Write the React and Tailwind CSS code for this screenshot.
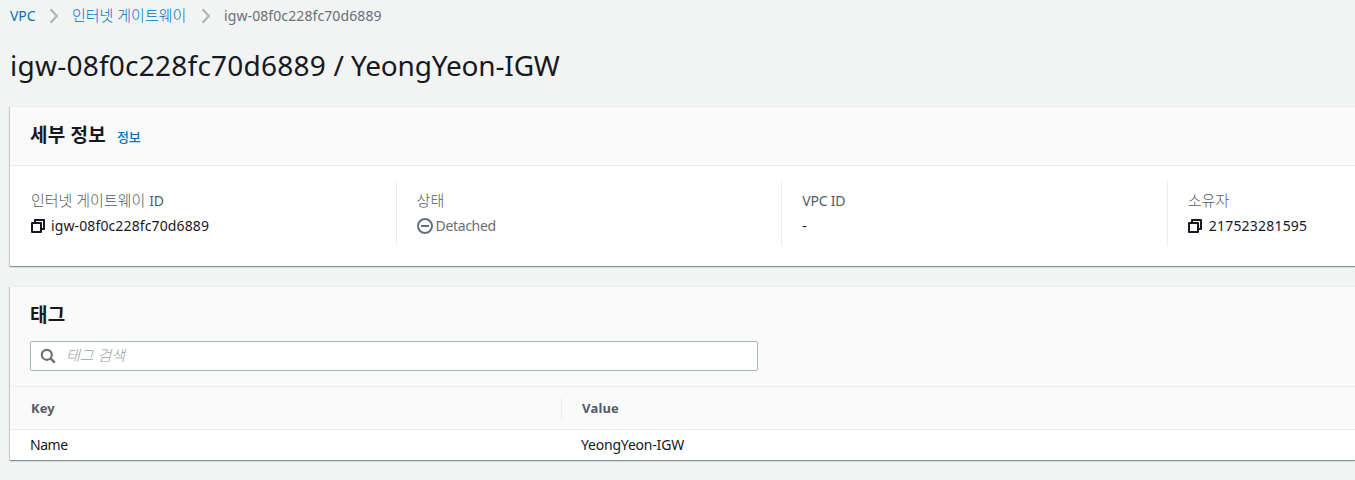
import React from "react";

const Chevron = () => (
  <svg className="shrink-0" width="10" height="16" viewBox="0 0 10 16" fill="none" stroke="#aab7b8" strokeWidth="2">
    <path d="M1.5 1.2 L8 8 L1.5 14.8" />
  </svg>
);

const CopyIcon = () => (
  <svg className="shrink-0" width="14" height="14" viewBox="0 0 14 14" fill="none" stroke="#16191f" strokeWidth="2" strokeLinejoin="round">
    <path d="M1 4h9v9H1z" />
    <path d="M4 4V1h9v9h-3" />
  </svg>
);

const DetachedIcon = () => (
  <svg className="shrink-0" width="16" height="16" viewBox="0 0 16 16" fill="none" stroke="#687078" strokeWidth="2">
    <circle cx="8" cy="8" r="7" />
    <path d="M4 8h8" />
  </svg>
);

const SearchIcon = () => (
  <svg className="shrink-0" width="16" height="16" viewBox="0 0 16 16" fill="none" stroke="#687078" strokeWidth="2.2">
    <circle cx="6.8" cy="6.8" r="5" />
    <path d="M10.4 10.4 L14.8 14.6" strokeWidth="2.4" />
  </svg>
);

const panel = "ml-[10px] bg-white shadow-[0_1px_1px_0_rgba(0,28,36,0.25),1px_1px_1px_0_rgba(0,28,36,0.15),-1px_1px_1px_0_rgba(0,28,36,0.15)] border-t border-[#eaeded]";

function Field({ label, divider, children }) {
  return (
    <div className={"h-[65px] w-[385.6px] shrink-0 " + (divider ? "border-l border-[#eaeded] pl-5" : "pl-[21px]")}>
      <div className="mt-[9px] flex h-[22px] items-baseline whitespace-nowrap text-[14px] leading-[22px] text-[#545b64]">{label}</div>
      <div className="mt-[3px] flex h-[22px] items-center whitespace-nowrap text-[14px] leading-[22px]">{children}</div>
    </div>
  );
}

export default function App() {
  return (
    <div className="h-[480px] w-full overflow-hidden bg-[#f2f3f3] font-['Noto_Sans','Noto_Sans_CJK_KR',sans-serif] text-[14px] text-[#16191f]">
      <nav className="flex h-8 items-center whitespace-nowrap pl-[10px] leading-[22px]">
        <a className="w-[39px] text-[14px] tracking-[-0.1px] text-[#0073bb]">VPC</a>
        <Chevron />
        <a className="ml-[13px] w-[129px] pb-[2px] text-[15px] font-light text-[#0073bb]">인터넷 게이트웨이</a>
        <Chevron />
        <span className="ml-[13px] tracking-[0.1px] text-[#687078]">igw-08f0c228fc70d6889</span>
      </nav>
      <h1 className="ml-[10px] mt-[15px] h-9 whitespace-nowrap text-[28px] leading-9">
        <span className="tracking-[0.24px]">igw-08f0c228fc70d6889 </span>
        <span className="tracking-[-0.18px]">/ YeongYeon-IGW</span>
      </h1>

      <section className={panel + " mt-[23px] h-[160px]"}>
        <header className="flex h-[59px] items-baseline border-b border-[#eaeded] bg-[#fafafa] pl-5 pt-[14px]">
          <h2 className="text-[19px] font-bold leading-[28px] tracking-[0.2px]">세부 정보</h2>
          <a className="ml-[11px] text-[13px] font-medium text-[#0073bb]">정보</a>
        </header>
        <div className="flex pt-[15px]">
          <Field label={<><span className="text-[15px] font-light leading-5">인터넷 게이트웨이</span><span className="ml-1 leading-5 tracking-[-0.3px]">ID</span></>}>
            <CopyIcon />
            <span className="ml-[6px] tracking-[0.12px]">igw-08f0c228fc70d6889</span>
          </Field>
          <Field label={<span className="text-[15px] font-light leading-5">상태</span>} divider>
            <DetachedIcon />
            <span className="ml-[3px] tracking-[-0.35px] text-[#687078]">Detached</span>
          </Field>
          <Field label={<span className="tracking-[-0.2px]">VPC ID</span>} divider>-</Field>
          <Field label={<span className="text-[15px] font-light leading-5">소유자</span>} divider>
            <CopyIcon />
            <span className="ml-[7px] tracking-[0.2px]">217523281595</span>
          </Field>
        </div>
      </section>

      <section className={panel + " mt-5 h-[174px]"}>
        <header className="h-[100px] border-b border-[#eaeded] bg-[#fafafa] pt-[14px]">
          <h2 className="h-7 pl-5 text-[19px] font-bold leading-[28px] tracking-[0.2px]">태그</h2>
          <div className="ml-5 mt-3 flex h-[30px] w-[728px] items-center rounded-[2px] border border-[#aab7b8] bg-white pl-[9px]">
            <SearchIcon />
            <span className="ml-[10px] pb-[2px] text-[15px] font-light italic leading-[22px] text-[#95a5a6]">태그 검색</span>
          </div>
        </header>
        <div className="flex h-[43px] items-center border-b border-[#eaeded] bg-[#fafafa] text-[13px] font-bold text-[#545b64]">
          <div className="w-[551px] pl-[21px] pt-[2px] tracking-[0.1px]">Key</div>
          <div className="flex h-[21px] items-center border-l border-[#eaeded] pl-5 pt-[2px] tracking-[0.2px]">Value</div>
        </div>
        <div className="flex h-[29px] items-center">
          <div className="w-[551px] pl-5 tracking-[-0.45px]">Name</div>
          <div className="pl-5 tracking-[-0.2px]">YeongYeon-IGW</div>
        </div>
      </section>
    </div>
  );
}
